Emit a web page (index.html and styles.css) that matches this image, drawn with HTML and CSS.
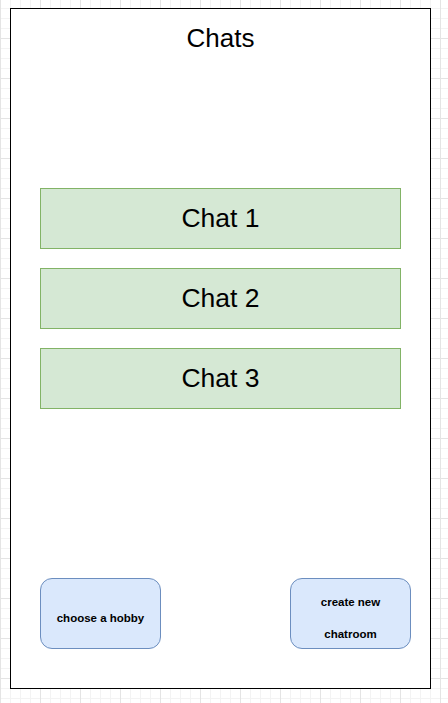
FILE: index.html
```html
<!DOCTYPE html>
<html>
<head>
<meta charset="utf-8">
<link rel="stylesheet" href="styles.css">
</head>
<body>
<div class="frame">
  <div class="title">Chats</div>
  <div class="chat-list">
    <div class="chat">Chat 1</div>
    <div class="chat">Chat 2</div>
    <div class="chat">Chat 3</div>
  </div>
  <div class="actions">
    <div class="btn">choose a hobby</div>
    <div class="btn btn-two">create new<br>chatroom</div>
  </div>
</div>
</body>
</html>
```
FILE: styles.css
```css
html {
  background-color: #ffffff;
  background-image:
    linear-gradient(to right, #e4e4e4 1px, transparent 1px),
    linear-gradient(to bottom, #e4e4e4 1px, transparent 1px),
    linear-gradient(to right, #f3f3f3 1px, transparent 1px),
    linear-gradient(to bottom, #f3f3f3 1px, transparent 1px);
  background-size: 40px 40px, 40px 40px, 10px 10px, 10px 10px;
  background-position: 0 0, 0 38px, 0 0, 0 8px;
  min-height: 703px;
}
body {
  margin: 0;
  font-family: "Liberation Sans", Arial, sans-serif;
  color: #000;
}
.frame {
  box-sizing: border-box;
  margin: 8px 0 0 10px;
  width: 421px;
  height: 681px;
  border: 1px solid #000;
  background: #fff;
  padding: 0 29px;
  display: flex;
  flex-direction: column;
}
.title {
  margin-top: 14px;
  height: 30px;
  line-height: 30px;
  font-size: 26px;
  text-align: center;
  margin-left: -29px;
  margin-right: -29px;
}
.chat-list {
  margin-top: 135px;
  display: flex;
  flex-direction: column;
  gap: 19px;
}
.chat {
  box-sizing: border-box;
  height: 61px;
  width: 361px;
  border: 1px solid #82b366;
  background: #d5e8d4;
  display: flex;
  align-items: center;
  justify-content: center;
  font-size: 26.5px;
}
.actions {
  margin-top: 169px;
  width: 371px;
  display: flex;
  justify-content: space-between;
}
.btn {
  box-sizing: border-box;
  width: 121px;
  height: 71px;
  padding-top: 9px;
  border: 1px solid #6c8ebf;
  background: #dae8fc;
  border-radius: 12px;
  display: flex;
  align-items: center;
  justify-content: center;
  text-align: center;
  font-size: 11.5px;
  font-weight: bold;
  line-height: 16px;
}
.btn-two {
  line-height: 32px;
}
```
